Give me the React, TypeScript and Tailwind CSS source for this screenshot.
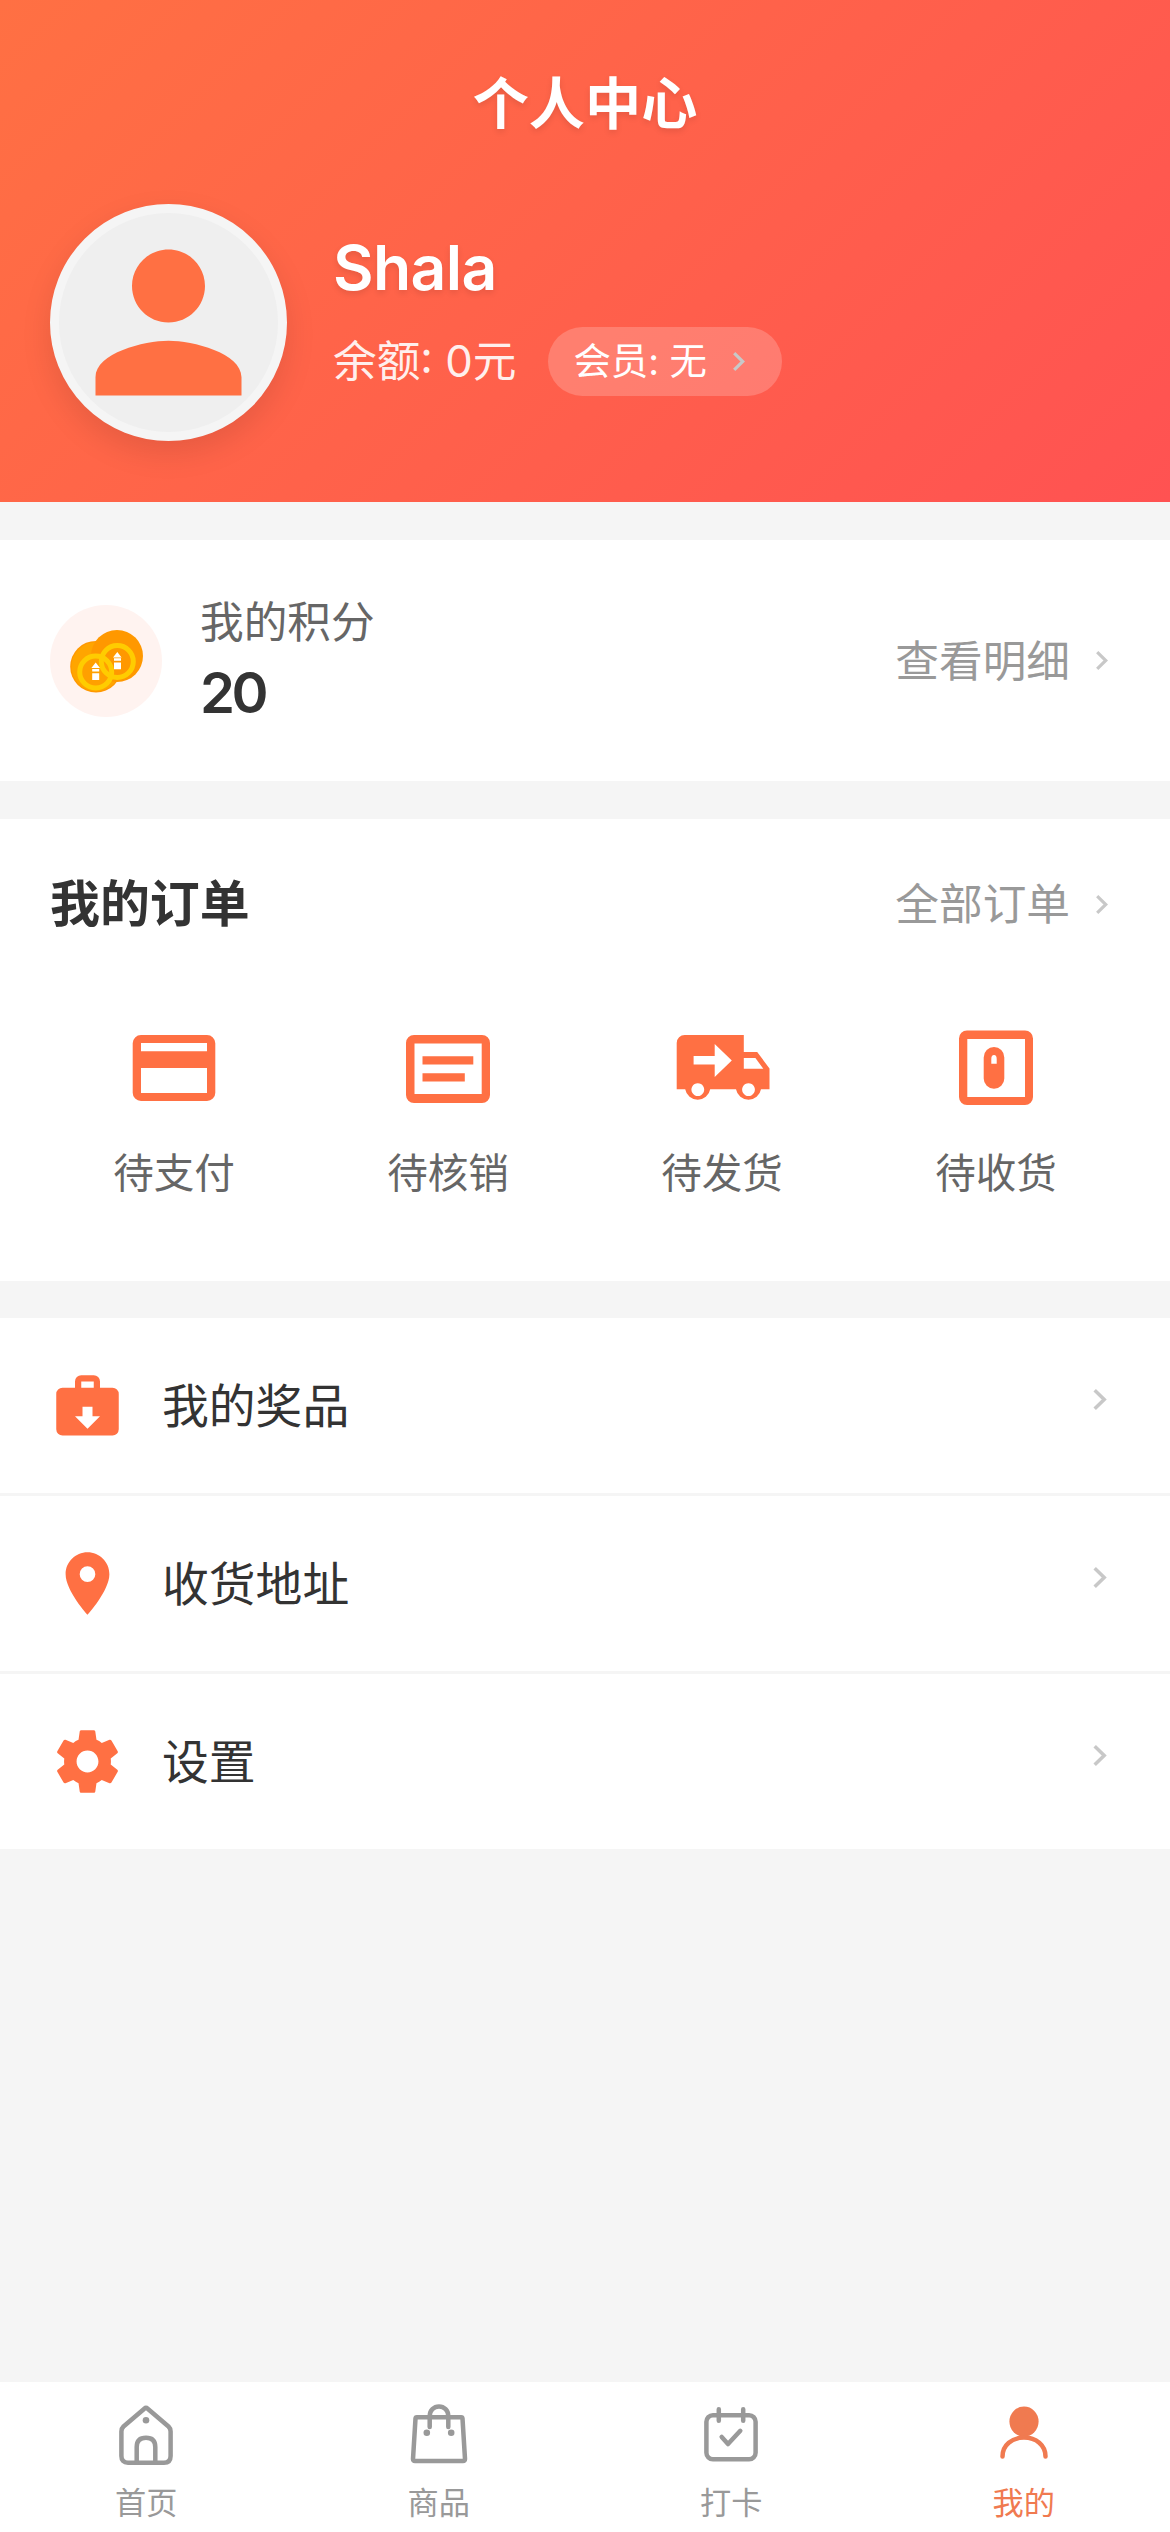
import type { ReactNode } from 'react';

const orders = [
  { label: '待支付', icon: <CardIcon /> },
  { label: '待核销', icon: <VerifyIcon /> },
  { label: '待发货', icon: <TruckIcon /> },
  { label: '待收货', icon: <ReceiveIcon /> },
];

const menus = [
  { label: '我的奖品', icon: <PrizeIcon /> },
  { label: '收货地址', icon: <PinIcon /> },
  { label: '设置', icon: <GearIcon /> },
];

const tabs = [
  { label: '首页', icon: <HomeIcon /> },
  { label: '商品', icon: <BagIcon /> },
  { label: '打卡', icon: <CheckinIcon /> },
  { label: '我的', icon: <MineIcon />, active: true },
];

function Chevron({ className }: { className: string }) {
  return (
    <svg viewBox="0 0 12 19" className={className} fill="none" stroke="#c8c8c8" strokeWidth="3.2">
      <path d="M1.2 1.2 L9.8 9.5 L1.2 17.8" />
    </svg>
  );
}

function OrderSvg({ children }: { children: ReactNode }) {
  return (
    <svg viewBox="0 0 100 80" className="h-[80px] w-[100px]" fill="#ff7043" fillRule="evenodd">
      {children}
    </svg>
  );
}

function CardIcon() {
  return (
    <OrderSvg>
      <path d="M17 8H83a8.3 8.3 0 0 1 8.3 8.3V65.7a8.3 8.3 0 0 1-8.3 8.3H17a8.3 8.3 0 0 1-8.3-8.3V16.3A8.3 8.3 0 0 1 17 8ZM17 16V24.3H83V16ZM17 41V66H83V41Z" />
    </OrderSvg>
  );
}

function VerifyIcon() {
  return (
    <OrderSvg>
      <path d="M16 8H84a8 8 0 0 1 8 8V68a8 8 0 0 1-8 8H16a8 8 0 0 1-8-8V16a8 8 0 0 1 8-8ZM16.5 16.5V67H83.7V16.5Z" />
      <path d="M24.5 29.2H75.3V37.6H24.5ZM24.5 46.2H66.8V54.6H24.5Z" />
    </OrderSvg>
  );
}

function TruckIcon() {
  return (
    <OrderSvg>
      <path d="M12.8 8H71.8V25H85.2L97.5 41.5V62.3H89A12.7 12.7 0 0 1 64 62.3H38.2A12.7 12.7 0 0 1 13.2 62.3H4.7V16A8 8 0 0 1 12.8 8ZM71.8 31V41.7H91.3L83.4 31ZM21.6 29V37.4H42.7V50L59.8 33.4L42.7 17V29ZM25.8 56.2a6.4 6.4 0 1 0 .01 0ZM76.5 56.2a6.4 6.4 0 1 0 .01 0Z" />
    </OrderSvg>
  );
}

function ReceiveIcon() {
  return (
    <OrderSvg>
      <path d="M21 3.5H79a8 8 0 0 1 8 8V70a8 8 0 0 1-8 8H21a8 8 0 0 1-8-8V11.5a8 8 0 0 1 8-8ZM21.3 12V70H79V12Z" />
      <path d="M37.7 30.4a10.3 10.3 0 0 1 20.6 0V51.5a10.3 10.3 0 0 1-20.6 0ZM45.3 36.8H50.7V32a2.7 4 0 0 0-5.4 0Z" />
    </OrderSvg>
  );
}

function MenuSvg({ children }: { children: ReactNode }) {
  return (
    <svg viewBox="0 0 24 24" className="h-[75px] w-[75px]" fill="#ff7043" fillRule="evenodd">
      {children}
    </svg>
  );
}

function PrizeIcon() {
  return (
    <MenuSvg>
      <path d="M10 2.3h4a2 2 0 0 1 2 2v2h4a2 2 0 0 1 2 2v11.3a2 2 0 0 1-2 2H4a2 2 0 0 1-2-2V8.3a2 2 0 0 1 2-2h4v-2a2 2 0 0 1 2-2ZM10 4.3v2h4v-2ZM10.4 12.4v3H8l4 4 4-4h-2.4v-3Z" />
    </MenuSvg>
  );
}

function PinIcon() {
  return (
    <MenuSvg>
      <path d="M12 2C8.13 2 5 5.13 5 9c0 5.25 7 13 7 13s7-7.75 7-13c0-3.87-3.13-7-7-7zm0 9.5a2.5 2.5 0 1 1 0-5 2.5 2.5 0 0 1 0 5z" />
    </MenuSvg>
  );
}

function GearIcon() {
  return (
    <MenuSvg>
      <path d="M19.43 12.98c.04-.32.07-.64.07-.98s-.03-.66-.07-.98l2.11-1.65c.19-.15.24-.42.12-.64l-2-3.46c-.12-.22-.39-.3-.61-.22l-2.49 1c-.52-.4-1.08-.73-1.69-.98l-.38-2.65C14.46 2.18 14.25 2 14 2h-4c-.25 0-.46.18-.49.42l-.38 2.65c-.61.25-1.17.59-1.69.98l-2.49-1c-.23-.09-.49 0-.61.22l-2 3.46c-.13.22-.07.49.12.64l2.11 1.65c-.04.32-.07.65-.07.98s.03.66.07.98l-2.11 1.65c-.19.15-.24.42-.12.64l2 3.46c.12.22.39.3.61.22l2.49-1c.52.4 1.08.73 1.69.98l.38 2.65c.03.24.24.42.49.42h4c.25 0 .46-.18.49-.42l.38-2.65c.61-.25 1.17-.59 1.69-.98l2.49 1c.23.09.49 0 .61-.22l2-3.46c.12-.22.07-.49-.12-.64l-2.11-1.65zM12 15.5c-1.93 0-3.5-1.57-3.5-3.5s1.57-3.5 3.5-3.5 3.5 1.57 3.5 3.5-1.57 3.5-3.5 3.5z" />
    </MenuSvg>
  );
}

function TabSvg({ children }: { children: ReactNode }) {
  return (
    <svg
      viewBox="0 0 60 64"
      className="h-[64px] w-[60px]"
      fill="none"
      stroke="currentColor"
      strokeWidth="4.5"
      strokeLinecap="round"
      strokeLinejoin="round"
    >
      {children}
    </svg>
  );
}

function HomeIcon() {
  return (
    <TabSvg>
      <path d="M28.3 6.7Q30 5.2 31.7 6.7L52.5 24.5Q54.6 26.5 54.6 29.5V54Q54.6 60.7 48 60.7H12Q5.4 60.7 5.4 54V29.5Q5.4 26.5 7.5 24.5Z" />
      <path d="M20.7 60V45Q20.7 35.7 30 35.7Q39.3 35.7 39.3 45V60" />
      <circle cx="30" cy="18.3" r="3.3" fill="currentColor" stroke="none" />
    </TabSvg>
  );
}

function BagIcon() {
  return (
    <TabSvg>
      <path d="M7.8 15.2H52.2Q53.4 15.2 53.5 16.5L56 57Q56 58.9 54 58.9H6Q4 58.9 4 57L6.5 16.5Q6.6 15.2 7.8 15.2Z" />
      <path d="M20.7 25V14C20.7 8.500 24.800 4.500 30 4.500S39.300 8.500 39.300 14V25" />
      <circle cx="17.8" cy="30.7" r="3.3" fill="currentColor" stroke="none" />
      <circle cx="42.2" cy="30.7" r="3.3" fill="currentColor" stroke="none" />
    </TabSvg>
  );
}

function CheckinIcon() {
  return (
    <TabSvg>
      <rect x="5.4" y="13.2" width="49.2" height="44" rx="6.5" />
      <path d="M17.8 7.3V18.7M42.2 7.3V18.7M20.7 35L27 42L39.3 28.8" />
    </TabSvg>
  );
}

function MineIcon() {
  return (
    <TabSvg>
      <ellipse cx="30" cy="19.6" rx="14.6" ry="15" fill="currentColor" stroke="none" />
      <path d="M8.5 54.5C8.5 43 18 35.6 30 35.6S51.5 43 51.5 54.5" />
    </TabSvg>
  );
}

function CoinsIcon() {
  return (
    <svg viewBox="0 0 80 70" className="h-[70px] w-[80px]" fill="none">
      <circle cx="30" cy="40.7" r="25.8" fill="#ff9800" />
      <circle cx="30" cy="40.7" r="24.5" fill="#ffa500" />
      <circle cx="51" cy="30" r="26" fill="#ff9800" />
      <circle cx="29.7" cy="46" r="16" fill="#ffa000" />
      <circle cx="51.3" cy="35.5" r="16" stroke="#ffcc00" strokeWidth="5" />
      <circle cx="29.7" cy="46" r="16" stroke="#ffcc00" strokeWidth="5" />
      <path
        fill="#fff"
        d="M51.3 26l4.3 5.4h-8.6ZM48 32.3h7v2.5h-7ZM48 36.6h7v6.7h-7ZM29.7 36.6l4.3 5.4h-8.6ZM26.2 42.9h7v2.5h-7ZM26.2 47.2h7v6.7h-7Z"
      />
    </svg>
  );
}

export default function App() {
  return (
    <div className="flex h-[2532px] w-[1170px] flex-col bg-[#f5f5f5] font-['Inter','Noto_Sans_CJK_SC',sans-serif] text-[#333]">
      <header className="h-[502px] bg-linear-[135deg,#ff7043,#ff5252] text-white">
        <h1 className="pt-[64px] text-center text-[56.16px] leading-[80px] font-bold text-shadow-[0_3px_6px_rgba(0,0,0,0.1)]">
          个人中心
        </h1>
        <div className="mt-[60px] flex items-center px-[50px]">
          <div className="size-[237px] shrink-0 rounded-full border-[9px] border-[#f5f5f5] bg-[#efefef] shadow-[0_12px_31px_rgba(0,0,0,0.1)]">
            <svg viewBox="0 0 24 24" className="size-full" fill="#ff7043">
              <path d="M12 12c2.21 0 4-1.79 4-4s-1.79-4-4-4-4 1.79-4 4 1.79 4 4 4zm0 2c-2.67 0-8 1.34-8 4v2h16v-2c0-2.66-5.33-4-8-4z" />
            </svg>
          </div>
          <div className="mb-[23px] ml-[46px] flex flex-col">
            <div className="text-[62.4px] leading-[84px] font-semibold tracking-[-0.01em] text-shadow-[0_3px_6px_rgba(0,0,0,0.1)]">
              Shala
            </div>
            <div className="mt-[17px] flex items-center">
              <span className="text-[43.68px] leading-[66px] opacity-90">余额: 0元</span>
              <div className="ml-[32px] flex h-[69px] w-[234px] items-center rounded-full bg-white/20 pl-[25px]">
                <span className="text-[37.44px] leading-[56px]">会员: 无</span>
                <Chevron className="ml-[26px] h-[19px] w-[12px]" />
              </div>
            </div>
          </div>
        </div>
      </header>

      <section className="mt-[38px] flex h-[241px] items-center bg-white px-[50px]">
        <div className="flex size-[112px] items-center justify-center rounded-full bg-[#fff3f0]">
          <CoinsIcon />
        </div>
        <div className="ml-[38px] flex-1">
          <div className="text-[43.68px] leading-[64px] text-[#666]">我的积分</div>
          <div className="text-[56.16px] leading-[76px] font-semibold tracking-[-0.06em]">20</div>
        </div>
        <div className="flex items-center text-[43.68px] leading-[64px] text-[#999]">
          <span className="pt-[2px]">查看明细</span>
          <Chevron className="mr-[12px] ml-[26px] h-[19px] w-[12px]" />
        </div>
      </section>

      <section className="mt-[38px] h-[462px] bg-white">
        <div className="flex items-center justify-between pt-[50px] pr-[62px] pl-[50px]">
          <h2 className="text-[49.92px] leading-[70px] font-bold">我的订单</h2>
          <div className="flex items-center text-[43.68px] leading-[64px] text-[#999]">
            <span className="pt-[2px]">全部订单</span>
            <Chevron className="ml-[26px] h-[19px] w-[12px]" />
          </div>
        </div>
        <div className="mt-[88px] grid grid-cols-4 px-[37px]">
          {orders.map((item) => (
            <div key={item.label} className="flex flex-col items-center">
              {item.icon}
              <span className="mt-[37px] text-[40.56px] leading-[60px] text-[#666]">{item.label}</span>
            </div>
          ))}
        </div>
      </section>

      <section className="mt-[37px] bg-white">
        {menus.map((item) => (
          <div
            key={item.label}
            className="flex h-[178px] items-center border-b-3 border-[#f5f5f5] pr-[63px] pl-[50px] last:h-[175px] last:border-b-0"
          >
            {item.icon}
            <span className="ml-[37px] flex-1 pt-[1px] text-[46.8px] leading-[68px]">{item.label}</span>
            <Chevron className="mb-[12px] h-[21px] w-[14px]" />
          </div>
        ))}
      </section>

      <nav className="mt-auto grid h-[150px] grid-cols-4 bg-white pt-[20px]">
        {tabs.map((tab) => (
          <div
            key={tab.label}
            className={`flex flex-col items-center ${tab.active ? 'text-[#f07a50]' : 'text-[#999]'}`}
          >
            {tab.icon}
            <span className="mt-[15px] text-[31.2px] leading-[44px]">{tab.label}</span>
          </div>
        ))}
      </nav>
    </div>
  );
}
